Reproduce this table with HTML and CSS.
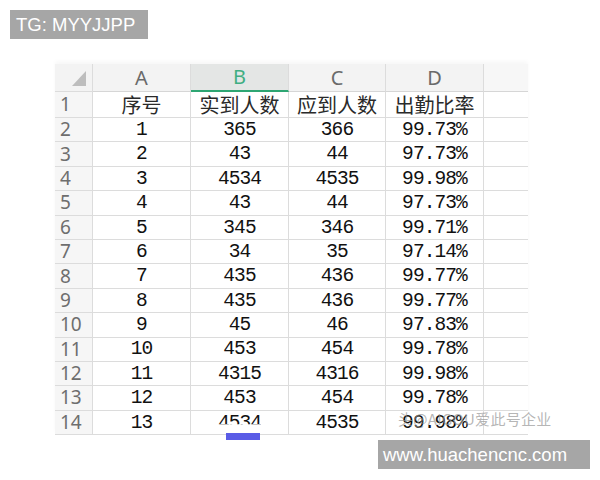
FILE: index.html
```html
<!DOCTYPE html>
<html>
<head>
<meta charset="utf-8">
<link rel="stylesheet" href="styles.css">
</head>
<body>
<div class="page">
  <div class="tag">TG: MYYJJPP</div>
  <div class="sheet">
    <div class="cell corner"><svg width="14" height="15" viewBox="0 0 14 15"><polygon points="14,0 14,15 0,15" fill="#bdbdbd"/></svg></div>
    <div class="cell colhead">A</div>
    <div class="cell colhead sel">B</div>
    <div class="cell colhead">C</div>
    <div class="cell colhead">D</div>
    <div class="cell colhead last"></div>

    <div class="cell rowhead">1</div>
    <div class="cell cjk">序号</div>
    <div class="cell cjk">实到人数</div>
    <div class="cell cjk">应到人数</div>
    <div class="cell cjk">出勤比率</div>
    <div class="cell last"></div>

    <div class="cell rowhead">2</div><div class="cell num">1</div><div class="cell num">365</div><div class="cell num">366</div><div class="cell num">99.73%</div><div class="cell last"></div>
    <div class="cell rowhead">3</div><div class="cell num">2</div><div class="cell num">43</div><div class="cell num">44</div><div class="cell num">97.73%</div><div class="cell last"></div>
    <div class="cell rowhead">4</div><div class="cell num">3</div><div class="cell num">4534</div><div class="cell num">4535</div><div class="cell num">99.98%</div><div class="cell last"></div>
    <div class="cell rowhead">5</div><div class="cell num">4</div><div class="cell num">43</div><div class="cell num">44</div><div class="cell num">97.73%</div><div class="cell last"></div>
    <div class="cell rowhead">6</div><div class="cell num">5</div><div class="cell num">345</div><div class="cell num">346</div><div class="cell num">99.71%</div><div class="cell last"></div>
    <div class="cell rowhead">7</div><div class="cell num">6</div><div class="cell num">34</div><div class="cell num">35</div><div class="cell num">97.14%</div><div class="cell last"></div>
    <div class="cell rowhead">8</div><div class="cell num">7</div><div class="cell num">435</div><div class="cell num">436</div><div class="cell num">99.77%</div><div class="cell last"></div>
    <div class="cell rowhead">9</div><div class="cell num">8</div><div class="cell num">435</div><div class="cell num">436</div><div class="cell num">99.77%</div><div class="cell last"></div>
    <div class="cell rowhead">10</div><div class="cell num">9</div><div class="cell num">45</div><div class="cell num">46</div><div class="cell num">97.83%</div><div class="cell last"></div>
    <div class="cell rowhead">11</div><div class="cell num">10</div><div class="cell num">453</div><div class="cell num">454</div><div class="cell num">99.78%</div><div class="cell last"></div>
    <div class="cell rowhead">12</div><div class="cell num">11</div><div class="cell num">4315</div><div class="cell num">4316</div><div class="cell num">99.98%</div><div class="cell last"></div>
    <div class="cell rowhead">13</div><div class="cell num">12</div><div class="cell num">453</div><div class="cell num">454</div><div class="cell num">99.78%</div><div class="cell last"></div>
    <div class="cell rowhead">14</div><div class="cell num">13</div><div class="cell num"><span class="cut">4534</span></div><div class="cell num">4535</div><div class="cell num">99.98%</div><div class="cell last"></div>

    <div class="bluebar"></div>
    <div class="watermark">头@AIGOU爱此号企业</div>
  </div>
  <div class="site">www.huachencnc.com</div>
</div>
</body>
</html>
```

FILE: styles.css
```css
html, body {
  margin: 0;
  padding: 0;
  background: #ffffff;
}
.page {
  position: relative;
  width: 600px;
  height: 480px;
  overflow: hidden;
  padding-top: 10px;
  box-sizing: border-box;
}
.tag {
  margin-left: 10px;
  width: 138px;
  height: 29px;
  box-sizing: border-box;
  padding-left: 6px;
  background: #a6a6a6;
  color: #ffffff;
  font-family: "Liberation Sans", Arial, sans-serif;
  font-size: 18.5px;
  line-height: 29px;
  white-space: nowrap;
}
.sheet {
  position: relative;
  margin-left: 55px;
  margin-top: 25px;
  width: 473px;
  display: grid;
  grid-template-columns: 38px 98px 98px 97px 98px 44px;
  grid-template-rows: 28px 26px repeat(13, 24.4px);
  box-shadow: 0 -3px 4px rgba(0,0,0,0.03);
}
.cell {
  box-sizing: border-box;
  border-right: 1px solid #dcdcdc;
  border-bottom: 1px solid #dcdcdc;
  display: flex;
  align-items: center;
  justify-content: center;
  white-space: nowrap;
}
.cell.last {
  border-right: none;
}
.corner {
  background: #f3f3f3;
  justify-content: flex-end;
  align-items: flex-end;
  padding: 0 6px 5px 0;
}
.corner svg {
  display: block;
}
.colhead {
  background: #f3f3f3;
  color: #6a6a6a;
  font-family: "Noto Sans", "Liberation Sans", sans-serif;
  font-size: 20px;
  line-height: 1;
  border-bottom: 1px solid #d6d6d6;
}
.colhead.sel {
  background: #e4e6e5;
  color: #3fae82;
  border-bottom: 2px solid #2ea673;
}
.colhead.last {
  background: #f7f7f7;
}
.rowhead {
  background: #f6f6f6;
  color: #6e6e6e;
  font-family: "Noto Sans", "Liberation Sans", sans-serif;
  font-size: 19px;
  line-height: 1;
  justify-content: flex-start;
  padding-left: 5px;
}
.cjk {
  color: #2a2a2a;
  font-family: "Noto Sans CJK SC", "Noto Sans", sans-serif;
  font-size: 20px;
  line-height: 1;
}
.num {
  color: #111111;
  font-family: "Liberation Mono", "Courier New", monospace;
  font-size: 19.5px;
  letter-spacing: -0.9px;
  line-height: 1;
  padding-top: 2px;
}
.cut {
  clip-path: inset(0 0 45% 0);
}
.bluebar {
  position: absolute;
  left: 171px;
  top: 369px;
  width: 34px;
  height: 7px;
  background: #5a5ce6;
}
.watermark {
  position: absolute;
  left: 343px;
  top: 347px;
  font-family: "Noto Sans CJK SC", "Noto Sans", sans-serif;
  font-size: 15px;
  line-height: 1;
  color: rgba(150,150,150,0.7);
  letter-spacing: 0.3px;
  white-space: nowrap;
}
.site {
  position: absolute;
  left: 378px;
  top: 440px;
  width: 212px;
  height: 29px;
  box-sizing: border-box;
  padding-left: 5px;
  background: #a6a6a6;
  color: #ffffff;
  font-family: "Liberation Sans", Arial, sans-serif;
  font-size: 18.5px;
  line-height: 29px;
  white-space: nowrap;
}
```
